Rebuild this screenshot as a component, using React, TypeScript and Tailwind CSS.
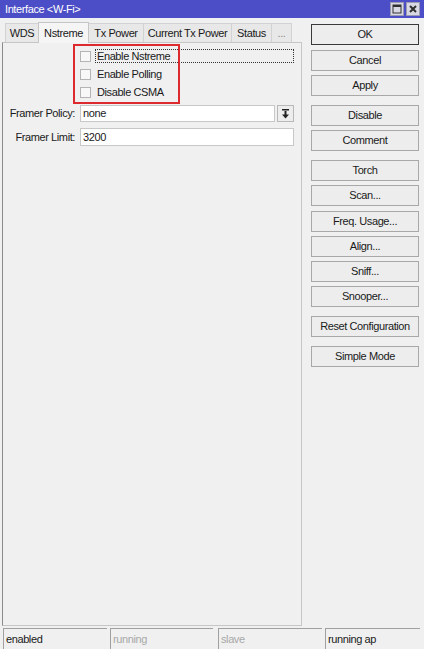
import React from "react";

const font = { fontFamily: '"Liberation Sans", Arial, sans-serif', letterSpacing: "-0.4px" };

function Btn({ label, def, className = "" }: { label: string; def?: boolean; className?: string }) {
  return (
    <div
      className={
        "h-[21px] flex items-center justify-center text-[11px] text-[#1a1a1a] bg-[#ededed] border whitespace-nowrap " +
        (def ? "border-[#3a3a3a]" : "border-[#a8a8a8]") +
        " " +
        className
      }
    >
      {label}
    </div>
  );
}

function Check({ label, focus }: { label: string; focus?: boolean }) {
  return (
    <div className="flex items-center h-[14px]">
      <div className="w-[11px] h-[11px] bg-[#f8f8f8] border border-[#b4b4b4]" />
      <div
        className={
          "ml-[4px] flex-1 h-[14px] flex items-center pl-[1px] text-[11px] text-[#1a1a1a] whitespace-nowrap " +
          (focus ? "border border-dotted border-[#333]" : "border border-transparent")
        }
      >
        {label}
      </div>
    </div>
  );
}

export default function App() {
  const tabs: { t: string; w: string }[] = [
    { t: "WDS", w: "w-[34px]" },
    { t: "Nstreme", w: "w-[51px]" },
    { t: "Tx Power", w: "w-[56px]" },
    { t: "Current Tx Power", w: "w-[89px]" },
    { t: "Status", w: "w-[41px]" },
    { t: "...", w: "w-[21px]" },
  ];
  return (
    <div className="w-[424px] h-[649px] bg-[#f0f0f0] flex flex-col overflow-hidden" style={font}>
      {/* title bar */}
      <div className="h-[18px] bg-[#4b4ec6] flex items-center pl-[5px] pr-[4px]">
        <span className="text-white text-[11px] flex-1 whitespace-nowrap">Interface &lt;W-Fi&gt;</span>
        <div className="flex gap-[2px]">
          <div className="w-[14px] h-[14px] bg-[#d8d8e4] border border-[#9a9ab0] flex items-center justify-center">
            <svg width="10" height="10" viewBox="0 0 10 10">
              <rect x="1" y="1" width="8" height="8" fill="none" stroke="#303030" strokeWidth="1" />
              <rect x="1" y="1" width="8" height="2" fill="#303030" />
            </svg>
          </div>
          <div className="w-[14px] h-[14px] bg-[#d8d8e4] border border-[#9a9ab0] flex items-center justify-center">
            <svg width="10" height="10" viewBox="0 0 10 10">
              <path d="M2 2 L8 8 M8 2 L2 8" stroke="#303030" strokeWidth="2" />
            </svg>
          </div>
        </div>
      </div>

      {/* body */}
      <div className="flex-1 flex">
        {/* left */}
        <div className="w-[302px] pl-[2px] pt-[3px] pb-[2px] flex flex-col">
          <div className="flex h-[21px] items-end pl-[3px]">
            {tabs.map(({ t, w }) => {
              const active = t === "Nstreme";
              return (
                <div
                  key={t}
                  className={
                    "text-[11px] flex items-center justify-center whitespace-nowrap border-t border-l border-r -mr-px " +
                    w +
                    (active
                      ? " h-[21px] bg-[#f5f5f5] border-[#c6c6c6] relative z-10 -mb-px text-[#1a1a1a]"
                      : " h-[19px] bg-[#e8e8e8] border-[#d2d2d2]") +
                    (t === "..." ? " text-[#888]" : active ? "" : " text-[#1a1a1a]")
                  }
                >
                  {t}
                </div>
              );
            })}
          </div>
          <div className="flex-1 border border-[#c6c6c6] border-l-[#8a8a8a] bg-[#f0f0f0] relative pt-[6px] pr-[7px]">
            <div className="grid grid-cols-[72px_1fr] gap-x-[5px]">
              <div />
              <div className="flex flex-col gap-[4px]">
                <Check label="Enable Nstreme" focus />
                <Check label="Enable Polling" />
                <Check label="Disable CSMA" />
              </div>
              <div className="text-[11px] text-[#1a1a1a] whitespace-nowrap mt-[6px] h-[17px] flex items-center justify-end">
                Framer Policy:
              </div>
              <div className="mt-[6px] flex gap-[2px]">
                <div className="flex-1 h-[17px] bg-white border border-[#c8c8c8] text-[11px] text-[#1a1a1a] flex items-center pl-[2px]">
                  none
                </div>
                <div className="w-[17px] h-[17px] bg-[#ededed] border border-[#b8b8b8] flex items-center justify-center">
                  <svg width="9" height="10" viewBox="0 0 9 10">
                    <rect x="1" y="0" width="7" height="1.5" fill="#222" />
                    <rect x="3.5" y="2" width="2" height="4" fill="#222" />
                    <path d="M1 5.5 L8 5.5 L4.5 9.5 Z" fill="#222" />
                  </svg>
                </div>
              </div>
              <div className="text-[11px] text-[#1a1a1a] whitespace-nowrap mt-[6px] h-[18px] flex items-center justify-end">
                Framer Limit:
              </div>
              <div className="mt-[6px] h-[18px] bg-white border border-[#c8c8c8] text-[11px] text-[#1a1a1a] flex items-center pl-[2px]">
                3200
              </div>
            </div>
            <div className="absolute left-[70px] top-[1px] w-[107px] h-[60px] border-2 border-[#dc2a2f]" />
          </div>
        </div>

        {/* right buttons */}
        <div className="ml-[9px] w-[108px] pt-[6px] flex flex-col">
          <Btn label="OK" def />
          <Btn label="Cancel" className="mt-[5px]" />
          <Btn label="Apply" className="mt-[4px]" />
          <Btn label="Disable" className="mt-[9px]" />
          <Btn label="Comment" className="mt-[4px]" />
          <Btn label="Torch" className="mt-[9px]" />
          <Btn label="Scan..." className="mt-[4px]" />
          <Btn label="Freq. Usage..." className="mt-[5px]" />
          <Btn label="Align..." className="mt-[4px]" />
          <Btn label="Sniff..." className="mt-[4px]" />
          <Btn label="Snooper..." className="mt-[4px]" />
          <Btn label="Reset Configuration" className="mt-[9px]" />
          <Btn label="Simple Mode" className="mt-[9px]" />
        </div>
      </div>

      {/* status bar */}
      <div className="h-[21px] flex pl-[3px]">
        <div className="w-[104px] border-t border-l border-[#a0a0a0] text-[11px] flex items-center pl-[2px] text-[#1a1a1a]">
          enabled
        </div>
        <div className="ml-[3px] w-[103px] border-t border-l border-[#a0a0a0] text-[11px] flex items-center pl-[2px] text-[#a8a8a8]">
          running
        </div>
        <div className="ml-[5px] w-[104px] border-t border-l border-[#a0a0a0] text-[11px] flex items-center pl-[2px] text-[#a8a8a8]">
          slave
        </div>
        <div className="ml-[3px] w-[95px] border-t border-l border-[#a0a0a0] text-[11px] flex items-center pl-[2px] text-[#1a1a1a]">
          running ap
        </div>
      </div>
    </div>
  );
}
